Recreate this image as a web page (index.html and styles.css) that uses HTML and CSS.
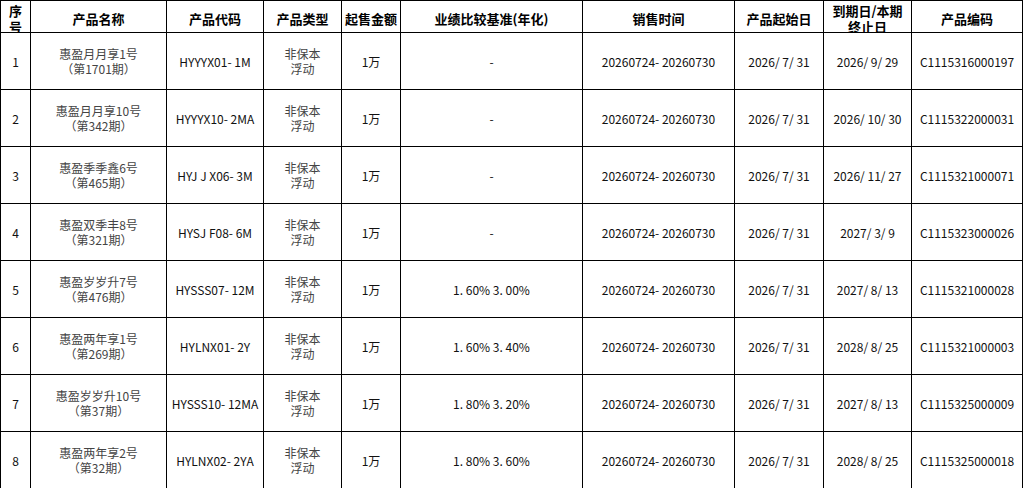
FILE: index.html
```html
<!DOCTYPE html>
<html lang="zh-CN">
<head>
<meta charset="utf-8">
<link rel="stylesheet" href="styles.css">
</head>
<body>
<table class="grid">
  <colgroup>
    <col class="c1"><col class="c2"><col class="c3"><col class="c4"><col class="c5">
    <col class="c6"><col class="c7"><col class="c8"><col class="c9"><col class="c10">
  </colgroup>
  <thead>
    <tr class="head">
      <th><div class="h">序号</div></th>
      <th><div class="h">产品名称</div></th>
      <th><div class="h">产品代码</div></th>
      <th><div class="h">产品类型</div></th>
      <th><div class="h">起售金额</div></th>
      <th><div class="h">业绩比较基准(年化)</div></th>
      <th><div class="h">销售时间</div></th>
      <th><div class="h">产品起始日</div></th>
      <th><div class="h">到期日/本期终止日</div></th>
      <th><div class="h">产品编码</div></th>
    </tr>
  </thead>
  <tbody>
    <tr>
      <td>1</td>
      <td class="name">惠盈月月享1号<br>（第1701期）</td>
      <td>HYYYX01- 1M</td>
      <td class="type">非保本<br>浮动</td>
      <td>1万</td>
      <td>-</td>
      <td>20260724- 20260730</td>
      <td>2026/ 7/ 31</td>
      <td>2026/ 9/ 29</td>
      <td>C1115316000197</td>
    </tr>
    <tr>
      <td>2</td>
      <td class="name">惠盈月月享10号<br>（第342期）</td>
      <td>HYYYX10- 2MA</td>
      <td class="type">非保本<br>浮动</td>
      <td>1万</td>
      <td>-</td>
      <td>20260724- 20260730</td>
      <td>2026/ 7/ 31</td>
      <td>2026/ 10/ 30</td>
      <td>C1115322000031</td>
    </tr>
    <tr>
      <td>3</td>
      <td class="name">惠盈季季鑫6号<br>（第465期）</td>
      <td>HYJ J X06- 3M</td>
      <td class="type">非保本<br>浮动</td>
      <td>1万</td>
      <td>-</td>
      <td>20260724- 20260730</td>
      <td>2026/ 7/ 31</td>
      <td>2026/ 11/ 27</td>
      <td>C1115321000071</td>
    </tr>
    <tr>
      <td>4</td>
      <td class="name">惠盈双季丰8号<br>（第321期）</td>
      <td>HYSJ F08- 6M</td>
      <td class="type">非保本<br>浮动</td>
      <td>1万</td>
      <td>-</td>
      <td>20260724- 20260730</td>
      <td>2026/ 7/ 31</td>
      <td>2027/ 3/ 9</td>
      <td>C1115323000026</td>
    </tr>
    <tr>
      <td>5</td>
      <td class="name">惠盈岁岁升7号<br>（第476期）</td>
      <td>HYSSS07- 12M</td>
      <td class="type">非保本<br>浮动</td>
      <td>1万</td>
      <td>1. 60% 3. 00%</td>
      <td>20260724- 20260730</td>
      <td>2026/ 7/ 31</td>
      <td>2027/ 8/ 13</td>
      <td>C1115321000028</td>
    </tr>
    <tr>
      <td>6</td>
      <td class="name">惠盈两年享1号<br>（第269期）</td>
      <td>HYLNX01- 2Y</td>
      <td class="type">非保本<br>浮动</td>
      <td>1万</td>
      <td>1. 60% 3. 40%</td>
      <td>20260724- 20260730</td>
      <td>2026/ 7/ 31</td>
      <td>2028/ 8/ 25</td>
      <td>C1115321000003</td>
    </tr>
    <tr>
      <td>7</td>
      <td class="name">惠盈岁岁升10号<br>（第37期）</td>
      <td>HYSSS10- 12MA</td>
      <td class="type">非保本<br>浮动</td>
      <td>1万</td>
      <td>1. 80% 3. 20%</td>
      <td>20260724- 20260730</td>
      <td>2026/ 7/ 31</td>
      <td>2027/ 8/ 13</td>
      <td>C1115325000009</td>
    </tr>
    <tr>
      <td>8</td>
      <td class="name">惠盈两年享2号<br>（第32期）</td>
      <td>HYLNX02- 2YA</td>
      <td class="type">非保本<br>浮动</td>
      <td>1万</td>
      <td>1. 80% 3. 60%</td>
      <td>20260724- 20260730</td>
      <td>2026/ 7/ 31</td>
      <td>2028/ 8/ 25</td>
      <td>C1115325000018</td>
    </tr>
  </tbody>
</table>
</body>
</html>
```

FILE: styles.css
```css
html, body {
  margin: 0;
  padding: 0;
  background: #fff;
}
body {
  font-family: "Noto Sans CJK SC", "Noto Sans", sans-serif;
  color: #111;
  overflow: hidden;
}
.grid {
  border-collapse: collapse;
  table-layout: fixed;
  width: 1023px;
}
.c1 { width: 30px; }
.c2 { width: 136px; }
.c3 { width: 97px; }
.c4 { width: 78px; }
.c5 { width: 59px; }
.c6 { width: 182px; }
.c7 { width: 152px; }
.c8 { width: 89px; }
.c9 { width: 88px; }
.c10 { width: 111px; }
.grid th, .grid td {
  border: 1px solid #000;
  padding: 0;
  text-align: center;
  vertical-align: middle;
}
.head {
  height: 32px;
}
.head th {
  font-size: 13px;
  font-weight: 700;
  color: #000;
}
.h {
  box-sizing: border-box;
  height: 31px;
  padding: 4px 3px 0;
  line-height: 16px;
  display: flex;
  align-items: center;
  justify-content: center;
  overflow: hidden;
}
tbody tr {
  height: 57px;
}
tbody td {
  font-size: 12px;
  line-height: 15px;
  color: #111;
  white-space: nowrap;
}
tbody td.name {
  color: #444;
}
tbody td.type {
  color: #444;
}
```
